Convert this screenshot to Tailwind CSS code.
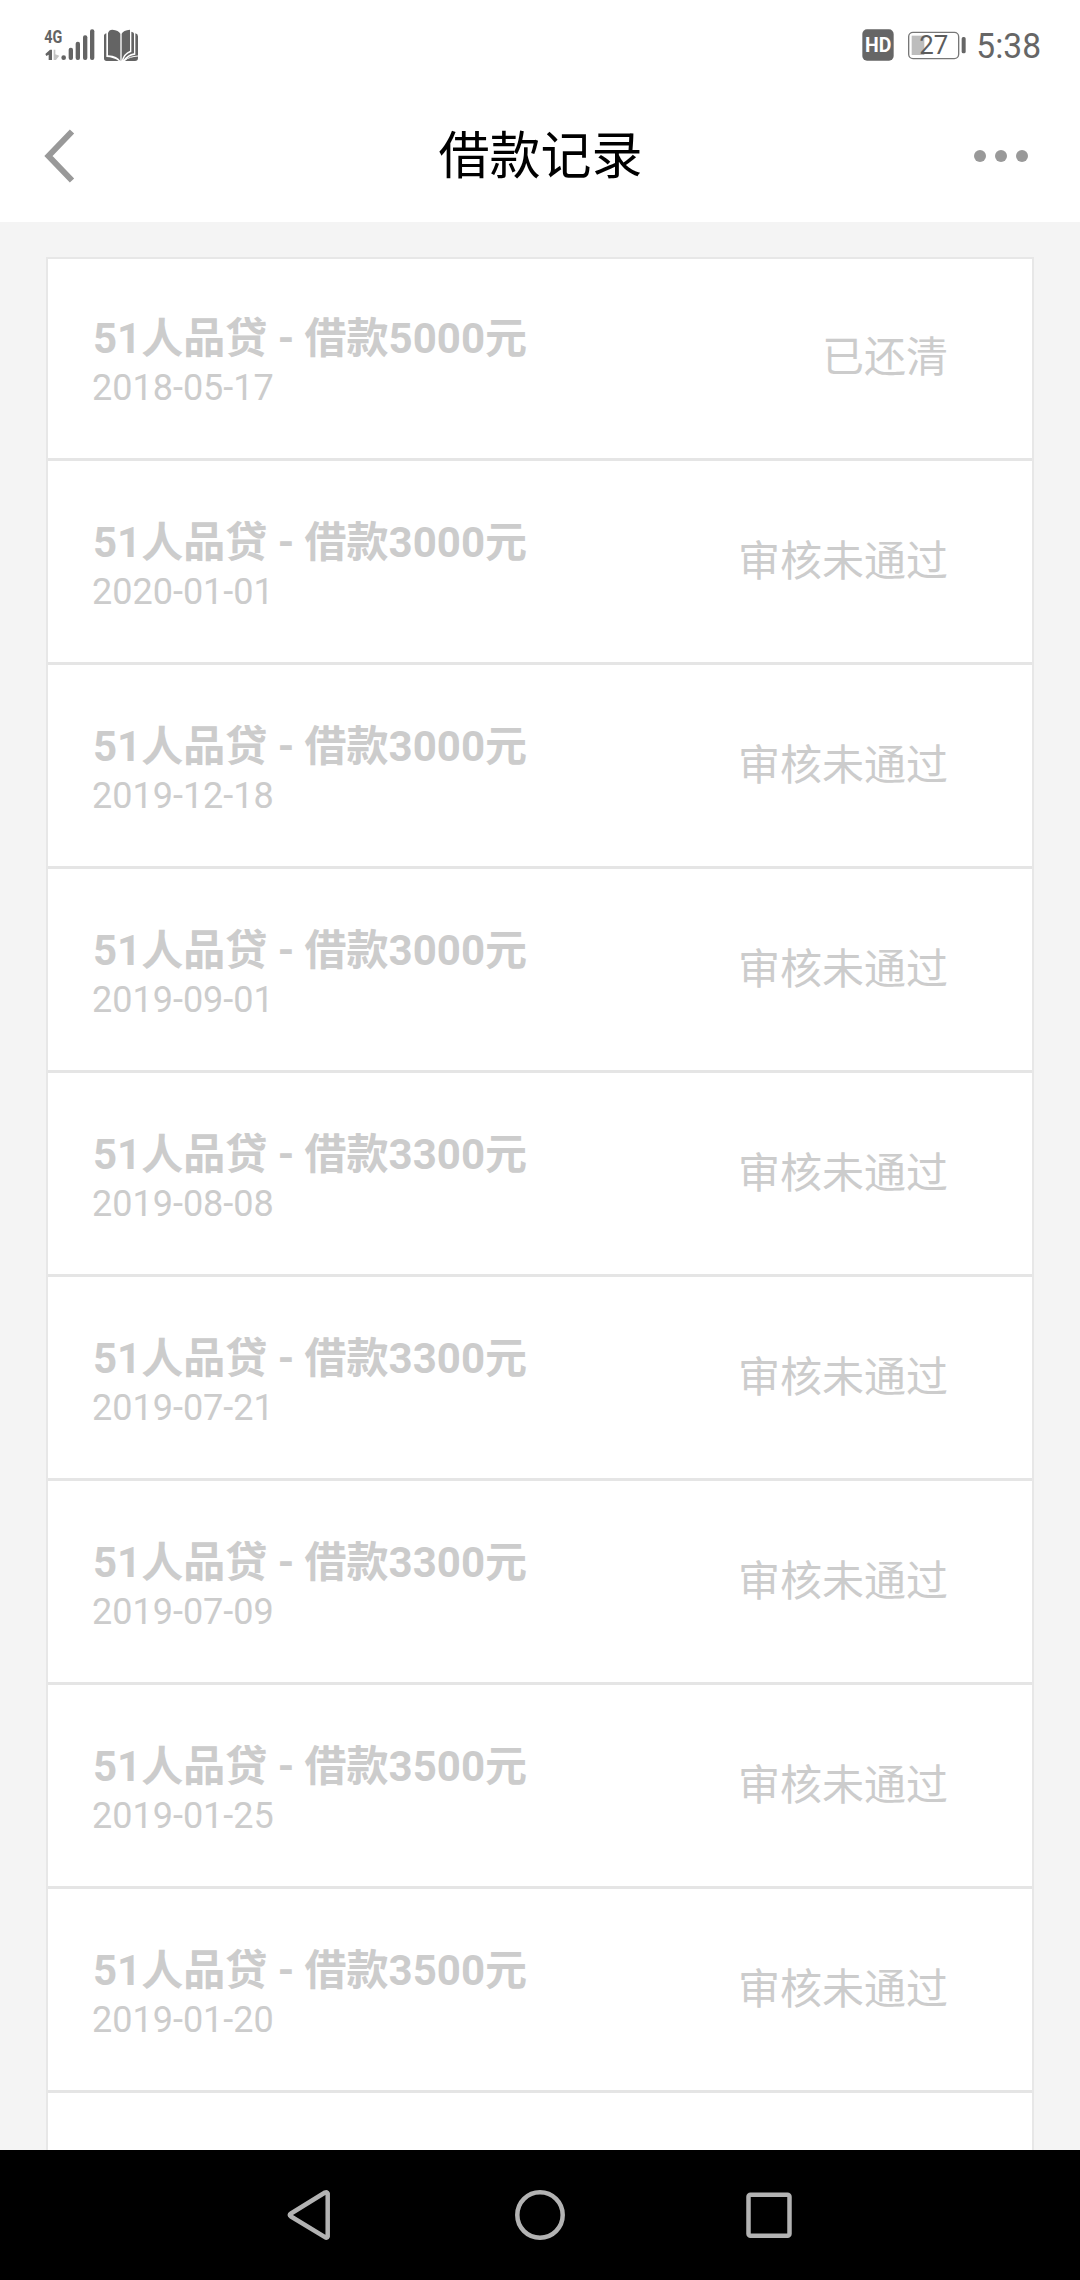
<!DOCTYPE html>
<html lang="zh-CN">
<head>
    <meta charset="UTF-8">
    <meta name="viewport" content="width=device-width, initial-scale=1.0">
    <title>借款记录</title>
    <script src="https://cdn.jsdelivr.net/npm/@tailwindcss/browser@4"></script>
    <style>
        body { font-family: Roboto, 'Noto Sans CJK SC', sans-serif; }
    </style>
</head>
<body class="bg-[#f4f4f4]">
    <div class="w-[1080px] h-[2280px] flex flex-col overflow-hidden">

        <!-- Status bar -->
        <div class="h-[90px] shrink-0 bg-white flex items-start justify-between pt-[15px] pl-[30px] pr-[20px]">
            <svg class="w-[130px] h-[60px]" viewBox="0 0 390 180" fill="#646464">
                <text x="43" y="84" font-size="57" font-weight="700" textLength="54" lengthAdjust="spacingAndGlyphs">4G</text>
                <path d="M46 117 60 104H66V135H56V119L49 123Z"/>
                <path d="M71 104H76V118L88 122 78 135H71Z" fill="#c4c4c4"/>
                <circle cx="101" cy="128" r="7"/>
                <rect x="116" y="98" width="13" height="37" rx="6"/>
                <rect x="137" y="80" width="13" height="55" rx="6"/>
                <rect x="159" y="61" width="13" height="74" rx="6"/>
                <rect x="180" y="43" width="13" height="92" rx="6"/>
                <!-- book -->
                <path d="M234 54Q237 44 247 44 266 46 271 56V138Q263 123 234 121Z"/>
                <path d="M275 56Q280 45 300 44V107Q280 115 275 138Z"/>
                <path d="M222 61Q223 56 229 55V126Q252 127 266 138H230Q222 138 222 130Z"/>
                <path d="M304 50Q312 51 312 56V115Q293 118 280 136 285 116 304 111Z"/>
                <path d="M316 55Q324 57 324 64V129Q324 138 315 138H285Q294 122 316 119Z"/>
                <path d="M286 135Q298 125 324 123" fill="none" stroke="#fff" stroke-width="3"/>
            </svg>
            <svg class="w-[220px] h-[60px]" viewBox="0 0 660 180" fill="#666">
                <rect x="67" y="43" width="94" height="94" rx="14"/>
                <text x="75" y="111" font-size="60" font-weight="700" fill="#fff" textLength="79" lengthAdjust="spacingAndGlyphs">HD</text>
                <rect x="206" y="52" width="150" height="79" rx="13" fill="#fff" stroke="#777" stroke-width="4"/>
                <rect x="215" y="62" width="38" height="58" fill="#bdbdbd"/>
                <rect x="365" y="66" width="12" height="49" rx="5"/>
                <text x="238" y="117" font-size="78" fill="#5c5c5c" textLength="87" lengthAdjust="spacingAndGlyphs">27</text>
                <text x="409" y="129" font-size="103" textLength="194" lengthAdjust="spacingAndGlyphs">5:38</text>
            </svg>
        </div>

        <!-- Header -->
        <div class="h-[132px] shrink-0 bg-white flex items-center justify-between pl-[44px] pr-[52px]">
            <svg class="w-[63px] h-[54px]" viewBox="0 0 63 54" fill="none" stroke="#999" stroke-width="6">
                <path d="M28 2.5 4.5 27 28 51.5"/>
            </svg>
            <h1 class="pt-[2px] text-[51px] leading-[60px] text-black">借款记录</h1>
            <div class="flex gap-[9px]">
                <span class="size-3 rounded-full bg-[#999]"></span>
                <span class="size-3 rounded-full bg-[#999]"></span>
                <span class="size-3 rounded-full bg-[#999]"></span>
            </div>
        </div>

        <!-- Records -->
        <div class="flex-1 overflow-hidden px-[46px] pt-[35px]">
            <div id="records" class="h-full bg-white border-x-2 border-t-2 border-[#e7e7e7]"></div>
        </div>

        <!-- Navigation bar -->
        <div class="h-[130px] shrink-0 bg-black">
            <svg class="w-[1080px] h-[130px]" viewBox="0 0 1080 130" fill="none" stroke="#b3b3b3" stroke-width="4.5" stroke-linejoin="round">
                <path d="M327.7 43.5V86.5Q327 88.5 325 87.2L291 66.5Q288.5 65 291 63.5L325 42.5Q327 41.5 327.7 43.5Z"/>
                <circle cx="540" cy="65" r="22.7"/>
                <rect x="748.5" y="44.8" width="41" height="41" rx="2"/>
            </svg>
        </div>
    </div>

    <script>
        const records = [
            { amount: 5000, date: '2018-05-17', status: '已还清' },
            { amount: 3000, date: '2020-01-01', status: '审核未通过' },
            { amount: 3000, date: '2019-12-18', status: '审核未通过' },
            { amount: 3000, date: '2019-09-01', status: '审核未通过' },
            { amount: 3300, date: '2019-08-08', status: '审核未通过' },
            { amount: 3300, date: '2019-07-21', status: '审核未通过' },
            { amount: 3300, date: '2019-07-09', status: '审核未通过' },
            { amount: 3500, date: '2019-01-25', status: '审核未通过' },
            { amount: 3500, date: '2019-01-20', status: '审核未通过' }
        ];

        document.getElementById('records').innerHTML = records.map((r, i) => `
            <div class="${i === 0 ? 'h-[202px] pt-[56px]' : 'h-[204px] pt-[58px]'} flex justify-between pl-[45px] pr-[84px] border-b-3 border-[#e5e5e5] text-[#ccc]">
                <div>
                    <div class="text-[42px] leading-[48px] font-bold">51人品贷 - 借款${r.amount}元</div>
                    <div class="pt-px -ml-px text-[36px] leading-[48px]">${r.date}</div>
                </div>
                <div class="pt-[19px] text-[42px] leading-[48px]">${r.status}</div>
            </div>`).join('');
    </script>
</body>
</html>
